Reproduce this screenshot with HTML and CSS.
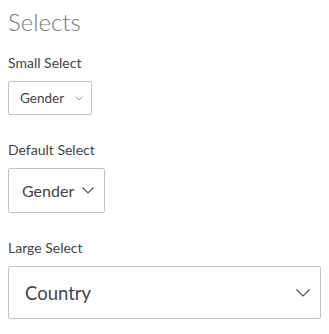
FILE: index.html
```html
<!DOCTYPE html>
<html>
<head>
<meta charset="utf-8">
<link rel="stylesheet" href="styles.css">
</head>
<body>
<h1 class="title">Selects</h1>
<div class="group">
  <div class="label">Small Select</div>
  <div class="select select-sm">
    <span>Gender</span>
    <svg class="chev" width="8" height="5" viewBox="0 0 8 5"><path d="M0.5 0.5 L4 4 L7.5 0.5" fill="none" stroke="#999" stroke-width="1"/></svg>
  </div>
</div>
<div class="group">
  <div class="label">Default Select</div>
  <div class="select select-md">
    <span>Gender</span>
    <svg class="chev" width="12" height="7" viewBox="0 0 12 7"><path d="M0.5 0.5 L6 6 L11.5 0.5" fill="none" stroke="#555" stroke-width="1.2"/></svg>
  </div>
</div>
<div class="group">
  <div class="label">Large Select</div>
  <div class="select select-lg">
    <span>Country</span>
    <svg class="chev" width="14" height="8" viewBox="0 0 14 8"><path d="M0.5 0.5 L7 7 L13.5 0.5" fill="none" stroke="#555" stroke-width="1.2"/></svg>
  </div>
</div>
</body>
</html>
```
FILE: styles.css
```css
body {
  margin: 8px;
  font-family: Lato, "Liberation Sans", sans-serif;
  color: #333;
  background: #fff;
}
.title {
  font-weight: 300;
  font-size: 24px;
  color: #777;
  margin: 0 0 18px 0;
  line-height: 28px;
}
.group {
  margin-bottom: 26px;
}
.group:last-child {
  margin-bottom: 0;
}
.label {
  font-size: 14px;
  line-height: 17px;
  color: #444;
  margin-bottom: 10px;
}
.select {
  box-sizing: border-box;
  border: 1px solid #c3c3c3;
  border-radius: 2px;
  display: flex;
  align-items: center;
  justify-content: space-between;
  color: #444;
}
.select-sm {
  width: 84px;
  height: 34px;
  font-size: 13.5px;
  padding: 0 8px 0 11px;
}
.select-md {
  width: 97px;
  height: 45px;
  font-size: 16px;
  padding: 0 10px 0 13px;
}
.select-lg {
  width: 100%;
  height: 53px;
  font-size: 18.5px;
  padding: 0 10px 0 16px;
}
.chev {
  display: block;
}
```
